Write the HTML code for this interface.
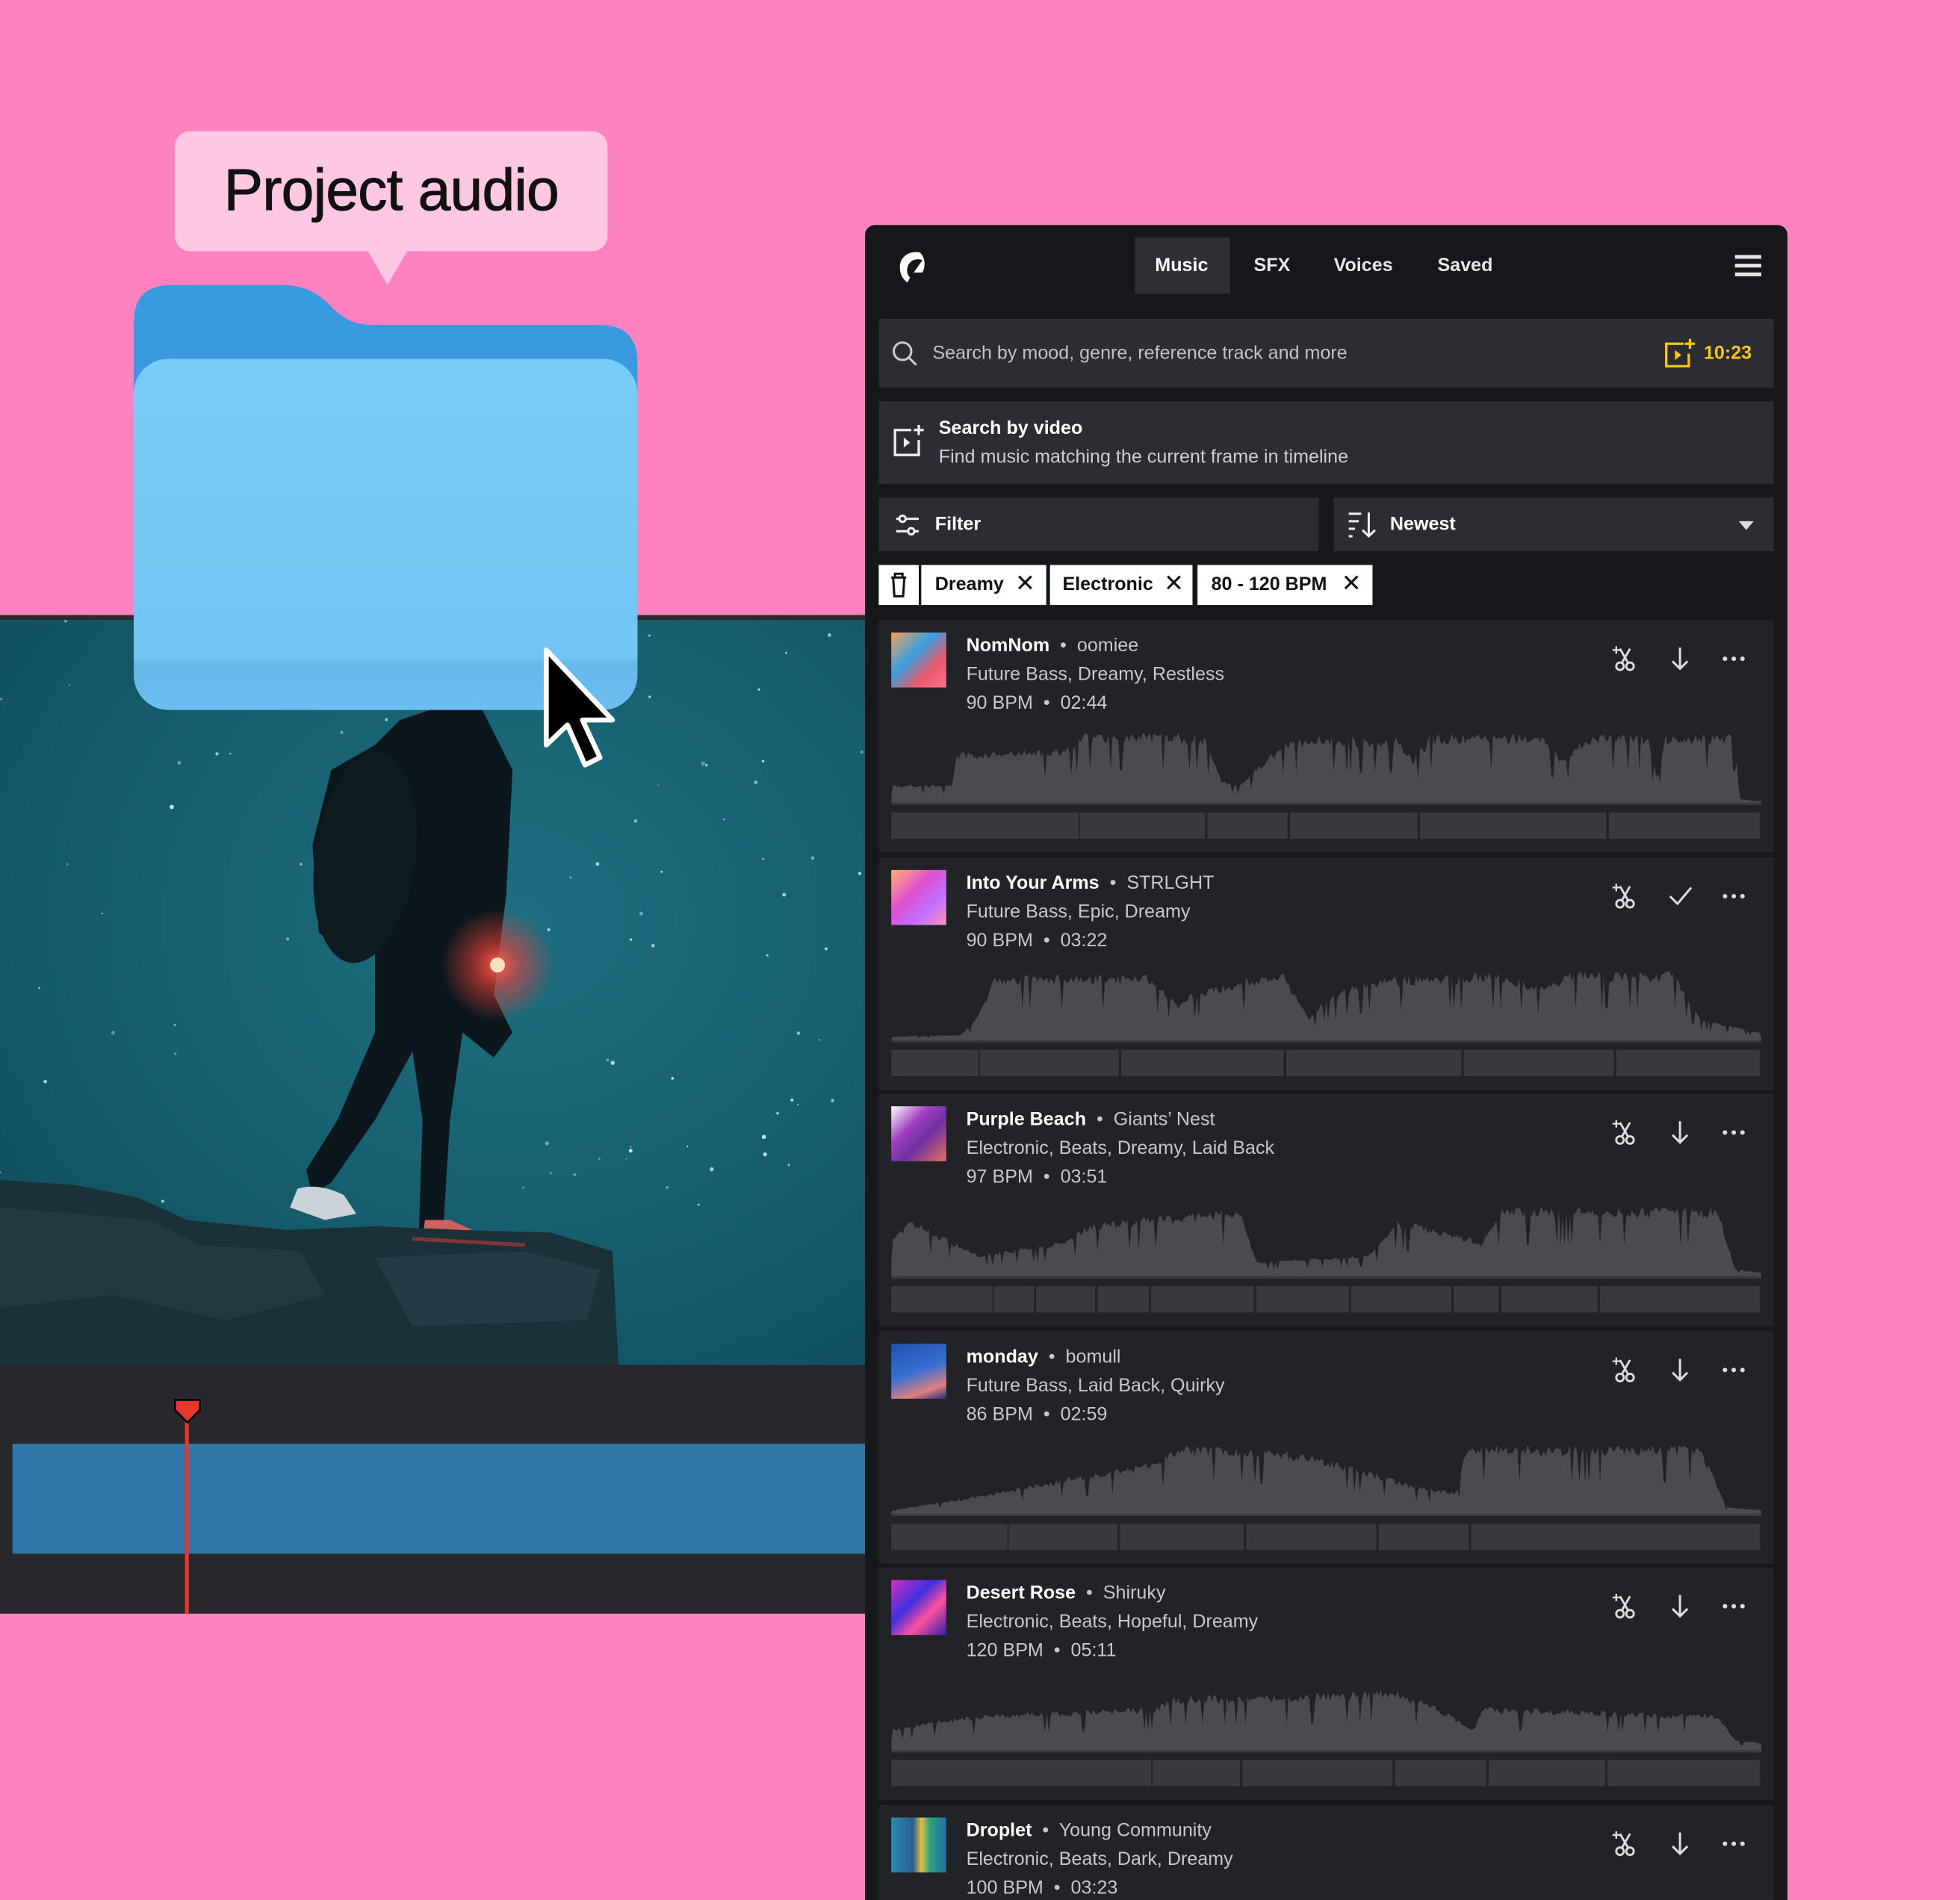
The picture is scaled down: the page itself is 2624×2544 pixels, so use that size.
<!DOCTYPE html>
<html><head><meta charset="utf-8">
<style>
html,body{margin:0;padding:0;width:2624px;height:2544px;overflow:hidden;background:#ff82c0;}
#wrap{position:relative;width:2624px;height:2544px;overflow:hidden;}
#s{position:absolute;left:0;top:0;width:1568px;height:1520px;overflow:hidden;transform:scale(1.67347,1.67368);transform-origin:0 0;font-family:"Liberation Sans",sans-serif;}
.a{position:absolute;}
.t{position:absolute;white-space:nowrap;}
.card{position:absolute;left:703px;width:716px;height:186px;background:#222327;overflow:hidden;}
.thumb{position:absolute;left:10px;top:10px;width:44px;height:44px;}
.title{position:absolute;left:70px;top:12px;font-size:15px;color:#fff;font-weight:bold;white-space:nowrap;}
.title span{font-weight:normal;color:#c8c8cc;}
.l2{position:absolute;left:70px;top:35px;font-size:15px;color:#c8c8cc;white-space:nowrap;}
.l3{position:absolute;left:70px;top:58px;font-size:15px;color:#c8c8cc;white-space:nowrap;}
.ic{position:absolute;top:20px;}
.wave{position:absolute;left:10px;top:84px;}
.seg{position:absolute;left:10px;top:154px;height:21px;width:696px;}
.seg div{position:absolute;top:0;height:21px;background:#393a3f;}
.tab{position:absolute;top:190px;height:45px;line-height:45px;font-size:15px;font-weight:bold;color:#e6e6e6;}
.chip{position:absolute;top:452px;height:32px;background:#fff;color:#111;font-size:15px;font-weight:bold;line-height:32px;}
</style></head><body>
<div id="wrap">
<div id="s">
<div class="a" style="left:140px;top:105px;width:346px;height:96px;background:#ffc8e2;border-radius:12px;"></div>
<div class="a" style="left:288px;top:190px;width:0;height:0;border-left:22px solid transparent;border-right:22px solid transparent;border-top:38px solid #ffc8e2;"></div>
<div class="t" style="left:140px;top:124px;width:346px;text-align:center;font-size:47px;color:#111;letter-spacing:-0.5px;-webkit-text-stroke:0.6px #111;">Project audio</div>

<div class="a" style="left:0;top:492px;width:692px;height:600px;background:radial-gradient(ellipse at 60% 40%,#1e6e80 0%,#17606f 45%,#0f4b59 100%);border-top:4px solid #2b2b2f;overflow:hidden;">
<svg width="692" height="600" style="position:absolute;left:0;top:0" id="photo">
<defs><radialGradient id="glow"><stop offset="0" stop-color="#ff5a4a" stop-opacity="1"/><stop offset="0.4" stop-color="#e8413a" stop-opacity="0.6"/><stop offset="1" stop-color="#e8413a" stop-opacity="0"/></radialGradient></defs>
<g id="stars"></g>
<path d="M320 80 L380 60 L410 120 L405 220 L395 300 L410 330 L395 350 L370 330 L360 400 L355 480 L345 500 L335 495 L338 400 L330 345 L300 400 L265 450 L250 460 L245 440 L270 400 L300 330 L300 260 L280 270 L255 250 L250 180 L265 120 L300 100 Z" fill="#0b171d"/>
<ellipse cx="292" cy="190" rx="40" ry="85" fill="#0e1c22" transform="rotate(8 292 190)"/>
<path d="M238 455 Q255 450 275 460 L285 475 L260 480 L232 470 Z" fill="#c9d3d8"/>
<path d="M340 480 L360 480 L378 488 L360 497 L338 494 Z" fill="#d06060"/>
<circle cx="398" cy="276" r="45" fill="url(#glow)"/>
<circle cx="398" cy="276" r="6" fill="#ffe0c0"/>
<path d="M0 448 L60 452 L110 462 L150 480 L230 488 L300 485 L370 488 L440 490 L490 505 L495 600 L0 600 Z" fill="#1b3138"/>
<path d="M0 470 L120 480 L160 500 L240 505 L260 540 L180 560 L90 540 L0 550 Z" fill="#243d45" opacity="0.7"/>
<path d="M300 510 L420 505 L480 520 L470 560 L330 565 Z" fill="#26404a" opacity="0.7"/>
<path d="M330 495 L420 500" stroke="#c83a3a" stroke-width="3" opacity="0.6"/>
</svg>
</div>

<!-- folder -->
<svg class="a" style="left:107px;top:228px" width="403" height="340"><path d="M0 300 V30 Q0 0 30 0 H120 Q140 0 155 14 Q170 32 190 32 H373 Q403 32 403 62 V300 Z" fill="#3a9ae0"/></svg>
<div class="a" style="left:107px;top:287px;width:403px;height:281px;background:linear-gradient(#7acdf7,#72c5f3 85%,#67b8ea 87%,#6cbef0);border-radius:28px;"></div>

<svg class="a" style="left:432px;top:516px" width="70" height="104"><path d="M5 4 L5 80 L22 64 L36 96 L48 90 L34 60 L58 60 Z" fill="#000" stroke="#fff" stroke-width="4" stroke-linejoin="round"/></svg>

<div class="a" style="left:0;top:1092px;width:692px;height:199px;background:#27272c;"></div>
<div class="a" style="left:10px;top:1155px;width:682px;height:88px;background:#3178a8;"></div>
<div class="a" style="left:148px;top:1132px;width:3px;height:159px;background:#e8372d;"></div>
<svg class="a" style="left:138px;top:1118px" width="24" height="22"><path d="M2 2 H22 V10 L12 20 L2 10 Z" fill="#e8372d" stroke="#000" stroke-width="1.5"/></svg>

<div class="a" style="left:692px;top:180px;width:738px;height:1340px;background:#16171a;border-radius:8px 8px 0 0;"></div>
<svg class="a" style="left:716px;top:198px" width="26" height="30"><path d="M20 4 C10 2 3 9 4 17 C4 22 7 26 10 28 L12 24 C10 22 9 19 10 16 C11 11 16 8 22 10 L15 20 L22 20 C24 16 25 9 20 4 Z" fill="#fff"/></svg>
<div class="a" style="left:908px;top:190px;width:76px;height:45px;background:#2d2f34;"></div>
<div class="tab" style="left:924px;color:#fff">Music</div>
<div class="tab" style="left:1003px">SFX</div>
<div class="tab" style="left:1067px">Voices</div>
<div class="tab" style="left:1150px">Saved</div>
<div class="a" style="left:1388px;top:204px;width:21px;height:2.5px;background:#e6e6e6;box-shadow:0 7px 0 #e6e6e6,0 14px 0 #e6e6e6;"></div>

<div class="a" style="left:703px;top:255px;width:716px;height:55px;background:#2b2d32;"></div>
<svg class="a" style="left:713px;top:272px" width="22" height="22"><circle cx="9" cy="9" r="7" fill="none" stroke="#ccc" stroke-width="1.8"/><path d="M14 14 L20 20" stroke="#ccc" stroke-width="1.8"/></svg>
<div class="t" style="left:746px;top:274px;font-size:15px;color:#c4c4c8;">Search by mood, genre, reference track and more</div>
<svg class="a" style="left:1330px;top:270px" width="28" height="26"><path d="M17 5 H3 V23 H21 V13" fill="none" stroke="#f5c518" stroke-width="2"/><path d="M10 10 L15 14 L10 18 Z" fill="#f5c518"/><path d="M22 1 V9 M18 5 H26" stroke="#f5c518" stroke-width="2"/></svg>
<div class="t" style="left:1363px;top:274px;font-size:15px;color:#f5c518;font-weight:bold;">10:23</div>

<div class="a" style="left:703px;top:321px;width:716px;height:66px;background:#2b2d32;"></div>
<svg class="a" style="left:713px;top:338px" width="28" height="30"><path d="M16 6 H3 V26 H22 V14" fill="none" stroke="#eee" stroke-width="2"/><path d="M10 12 L15 16 L10 20 Z" fill="#eee"/><path d="M22 2 V10 M18 6 H26" stroke="#eee" stroke-width="2"/></svg>
<div class="t" style="left:751px;top:334px;font-size:15px;color:#fff;font-weight:bold;">Search by video</div>
<div class="t" style="left:751px;top:357px;font-size:15px;color:#cfcfd3;">Find music matching the current frame in timeline</div>

<div class="a" style="left:703px;top:398px;width:352px;height:43px;background:#2b2d32;"></div>
<svg class="a" style="left:715px;top:410px" width="22" height="20"><path d="M2 5 H20 M2 15 H20" stroke="#eee" stroke-width="1.8"/><circle cx="7" cy="5" r="2.5" fill="#2b2d32" stroke="#eee" stroke-width="1.8"/><circle cx="14" cy="15" r="2.5" fill="#2b2d32" stroke="#eee" stroke-width="1.8"/></svg>
<div class="t" style="left:748px;top:411px;font-size:15px;color:#fff;font-weight:bold;">Filter</div>
<div class="a" style="left:1067px;top:398px;width:352px;height:43px;background:#2b2d32;"></div>
<svg class="a" style="left:1077px;top:408px" width="26" height="24"><path d="M2 3 H12 M2 9 H10 M2 15 H7 M2 21 H5" stroke="#eee" stroke-width="1.8"/><path d="M18 2 V21 M13 16 L18 21 L23 16" fill="none" stroke="#eee" stroke-width="1.8"/></svg>
<div class="t" style="left:1112px;top:411px;font-size:15px;color:#fff;font-weight:bold;">Newest</div>
<div class="a" style="left:1391px;top:417px;border-left:6px solid transparent;border-right:6px solid transparent;border-top:7px solid #ddd;"></div>

<div class="chip" style="left:703px;width:32px;"><svg width="32" height="32"><path d="M10 10 H22 M13 10 V7 H19 V10 M11.5 10 L12.5 25 H19.5 L20.5 10" fill="none" stroke="#111" stroke-width="1.8"/></svg></div>
<div class="chip" style="left:737px;width:100px;"><span style="margin-left:11px">Dreamy</span><span style="position:absolute;right:9px;font-weight:normal;font-size:19px">✕</span></div>
<div class="chip" style="left:840px;width:114px;"><span style="margin-left:10px">Electronic</span><span style="position:absolute;right:7px;font-weight:normal;font-size:19px">✕</span></div>
<div class="chip" style="left:958px;width:140px;"><span style="margin-left:11px">80 - 120 BPM</span><span style="position:absolute;right:9px;font-weight:normal;font-size:19px">✕</span></div>

<div id="cards"></div>
</div>
</div>

<script>
function rnd(seed){return function(){seed=(seed*16807)%2147483647;return (seed-1)/2147483646;};}
(function(){var r=rnd(7),g=document.getElementById('stars'),h='';for(var i=0;i<90;i++){h+='<circle cx="'+(r()*692).toFixed(1)+'" cy="'+(r()*480).toFixed(1)+'" r="'+(0.6+r()*1.1).toFixed(1)+'" fill="#bfe8f0" opacity="'+(0.4+r()*0.6).toFixed(2)+'"/>';}g.innerHTML=h;})();
var scis='<svg width="22" height="22"><path d="M7 3 L15 17 M15 3 L7 17" stroke="#ddd" stroke-width="1.7" fill="none"/><circle cx="7" cy="17" r="3" fill="#222327" stroke="#ddd" stroke-width="1.7"/><circle cx="15" cy="17" r="3" fill="#222327" stroke="#ddd" stroke-width="1.7"/><path d="M4 1 V7 M1 4 H7" stroke="#ddd" stroke-width="1.4"/></svg>';
var down='<svg width="22" height="22"><path d="M11 2 V19 M5 13 L11 19 L17 13" stroke="#ddd" stroke-width="1.8" fill="none"/></svg>';
var check='<svg width="22" height="22"><path d="M3 11 L9 17 L20 4" stroke="#ddd" stroke-width="1.8" fill="none"/></svg>';
var dots='<svg width="22" height="22"><circle cx="4" cy="11" r="1.8" fill="#ddd"/><circle cx="11" cy="11" r="1.8" fill="#ddd"/><circle cx="18" cy="11" r="1.8" fill="#ddd"/></svg>';
var tracks=[
{t:'NomNom',a:'oomiee',g:'Future Bass, Dreamy, Restless',m:'90 BPM &nbsp;•&nbsp; 02:44',th:'linear-gradient(135deg,#f5a05a,#3aa0e0 40%,#e85a6a 70%,#ff7090)',
 env:[[0,.25],[.07,.25],[.075,.7],[.2,.75],[.22,.98],[.36,.95],[.38,.3],[.4,.25],[.42,.5],[.46,.92],[.58,.9],[.6,.6],[.62,.95],[.75,.95],[.77,.6],[.8,.95],[.87,.95],[.88,.35],[.89,.95],[.97,.95],[.975,.05],[1,.02]],seg:[713,863,965,1031,1135,1286,1409],mid:down},
{t:'Into Your Arms',a:'STRLGHT',g:'Future Bass, Epic, Dreamy',m:'90 BPM &nbsp;•&nbsp; 03:22',th:'linear-gradient(135deg,#ffb070,#e050d0 40%,#c070ff 70%,#ff90c0)',
 env:[[0,.05],[.08,.07],[.1,.35],[.12,.9],[.3,.9],[.33,.5],[.35,.7],[.45,.95],[.48,.3],[.5,.6],[.55,.85],[.7,.95],[.75,.75],[.78,.95],[.9,.95],[.93,.3],[1,.1]],seg:[713,783,896,1028,1170,1292,1409],mid:check},
{t:'Purple Beach',a:'Giants\u2019 Nest',g:'Electronic, Beats, Dreamy, Laid Back',m:'97 BPM &nbsp;•&nbsp; 03:51',th:'linear-gradient(135deg,#fff,#a040c0 35%,#7030a0 60%,#e07060)',
 env:[[0,.5],[.02,.8],[.1,.3],[.2,.5],[.23,.75],[.4,.95],[.42,.2],[.55,.3],[.58,.8],[.68,.5],[.7,.95],[.95,.95],[.97,.1],[1,.05]],seg:[713,794,828,877,920,1004,1080,1162,1200,1279,1409],mid:down},
{t:'monday',a:'bomull',g:'Future Bass, Laid Back, Quirky',m:'86 BPM &nbsp;•&nbsp; 02:59',th:'linear-gradient(160deg,#2050b0,#3a70d0 50%,#e08080 80%,#203070)',
 env:[[0,.05],[.1,.25],[.2,.5],[.25,.6],[.3,.7],[.33,.95],[.45,.9],[.52,.7],[.6,.4],[.65,.3],[.66,.95],[.93,.95],[.96,.1],[1,.05]],seg:[713,806,895,996,1102,1176,1409],mid:down},
{t:'Desert Rose',a:'Shiruky',g:'Electronic, Beats, Hopeful, Dreamy',m:'120 BPM &nbsp;•&nbsp; 05:11',th:'linear-gradient(135deg,#d030c0,#4030e0 40%,#ff50a0 65%,#3020a0)',
 env:[[0,.3],[.1,.5],[.3,.6],[.33,.75],[.5,.8],[.58,.85],[.63,.6],[.67,.3],[.68,.6],[.8,.55],[.95,.5],[.97,.15],[1,.1]],seg:[713,921,993,1115,1190,1285,1409],mid:down},
{t:'Droplet',a:'Young Community',g:'Electronic, Beats, Dark, Dreamy',m:'100 BPM &nbsp;•&nbsp; 03:23',th:'linear-gradient(90deg,#2a8ab0,#2a6090 40%,#e0c040 55%,#30a080 70%,#2070a0)',
 env:[[0,.5],[1,.5]],seg:[713,1409],mid:down}
];
function lvl(env,x){for(var i=1;i<env.length;i++){if(x<=env[i][0]){var a=env[i-1],b=env[i];var f=(x-a[0])/((b[0]-a[0])||1);return a[1]+(b[1]-a[1])*f;}}return env[env.length-1][1];}
var html='';
tracks.forEach(function(tr,k){
 var top=496+k*189.5;var r=rnd(k*31+5);
 var ht=Math.min(186,1520-top);
 var d='M0,62';for(var x=0;x<=696;x+=1.5){var l=lvl(tr.env,x/696);var n=r();var h=l*58*(0.82+0.18*n);if(n<0.08)h*=0.55;d+=' L'+x.toFixed(1)+','+(62-h).toFixed(1);}d+=' L696,62 Z';
 var seg='';for(var i=0;i<tr.seg.length-1;i++){seg+='<div style="left:'+(tr.seg[i]-713+(i?1:0))+'px;width:'+(tr.seg[i+1]-tr.seg[i]-(i?2:0))+'px"></div>';}
 html+='<div class="card" style="top:'+top+'px;height:'+ht+'px">'+
 '<div class="thumb" style="background:'+tr.th+'"></div>'+
 '<div class="title">'+tr.t+' <span>&nbsp;•&nbsp; '+tr.a+'</span></div>'+
 '<div class="l2">'+tr.g+'</div><div class="l3">'+tr.m+'</div>'+
 '<div class="ic" style="left:586px">'+scis+'</div><div class="ic" style="left:630px">'+tr.mid+'</div><div class="ic" style="left:673px">'+dots+'</div>'+
 (ht>150?'<svg class="wave" width="696" height="64"><path d="'+d+'" fill="#4a4b51"/><rect x="0" y="62" width="696" height="2" fill="#3a3b40"/></svg><div class="seg">'+seg+'</div>':'')+
 '</div>';
});
document.getElementById('cards').innerHTML=html;
</script>
</body></html>
